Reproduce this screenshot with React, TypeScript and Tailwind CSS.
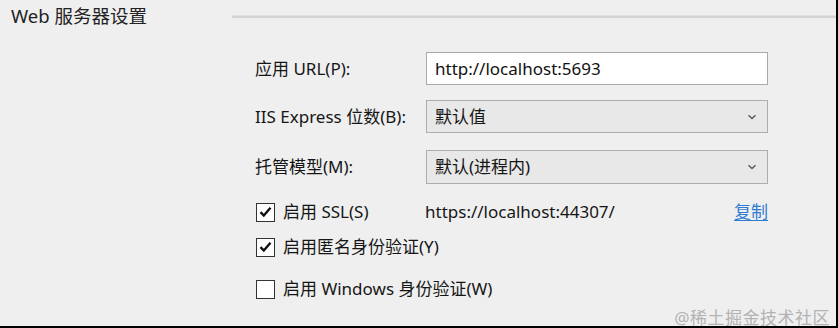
import React from "react";

const font = { fontFamily: '"Noto Sans", "Noto Sans CJK SC", sans-serif' };

function Chevron() {
  return (
    <svg width="10" height="7" viewBox="0 0 10 7" className="absolute right-[10px] top-1/2 -translate-y-1/2">
      <path d="M1.5 1.8 L5 5 L8.5 1.8" fill="none" stroke="#5a5a5a" strokeWidth="1.5" />
    </svg>
  );
}

function Check({ checked }: { checked: boolean }) {
  return (
    <div className="w-[19px] h-[19px] border-[1.5px] border-[#333] bg-white flex items-center justify-center shrink-0">
      {checked && (
        <svg width="13" height="12" viewBox="0 0 13 12">
          <path d="M1.5 6.2 L4.8 9.5 L11.5 1.8" fill="none" stroke="#111" strokeWidth="2.4" />
        </svg>
      )}
    </div>
  );
}

export default function App() {
  return (
    <div
      className="w-[838px] h-[328px] bg-[#efefef] border-r-2 border-b-2 border-black text-[#161616] overflow-hidden"
      style={font}
    >
      <div className="flex items-center h-[33px] pl-[11px]">
        <span className="text-[18.5px] leading-none text-[#222]">Web 服务器设置</span>
        <div className="flex-1 ml-[85px] h-[3px] bg-[#d3d3d3] border-t border-[#e0e0e0]" />
      </div>

      <div className="ml-[255px] w-[513px] text-[17px]">
        <div className="flex items-center mt-[19px] h-[33px]">
          <div className="w-[171px]">应用 URL(P):</div>
          <div className="flex-1 h-full bg-white border border-[#a9a9a9] flex items-center pl-[8px] text-[#111]">
            http://localhost:5693
          </div>
        </div>
        <div className="flex items-center mt-[15px] h-[33px]">
          <div className="w-[171px] whitespace-nowrap">IIS Express 位数(B):</div>
          <div className="relative flex-1 h-full bg-[#e8e8e8] border border-[#adadad] flex items-center pl-[8px]">
            默认值
            <Chevron />
          </div>
        </div>
        <div className="flex items-center mt-[17px] h-[34px]">
          <div className="w-[171px]">托管模型(M):</div>
          <div className="relative flex-1 h-full bg-[#e8e8e8] border border-[#adadad] flex items-center pl-[8px]">
            默认(进程内)
            <Chevron />
          </div>
        </div>

        <div className="flex items-center mt-[18px] h-[20px] ml-[1px]">
          <Check checked />
          <div className="ml-[8px] w-[142px]">启用 SSL(S)</div>
          <div className="flex-1">https://localhost:44307/</div>
          <a className="text-[#2f7bd2] underline underline-offset-2">复制</a>
        </div>
        <div className="flex items-center mt-[15px] h-[20px] ml-[1px]">
          <Check checked />
          <div className="ml-[8px]">启用匿名身份验证(Y)</div>
        </div>
        <div className="flex items-center mt-[22px] h-[20px] ml-[1px]">
          <Check checked={false} />
          <div className="ml-[8px]">启用 Windows 身份验证(W)</div>
        </div>
      </div>

      <div className="flex justify-end pr-[6px] mt-[6px]">
        <span className="text-[17px] text-[#b3b3b3] tracking-[0.5px]">@稀土掘金技术社区</span>
      </div>
    </div>
  );
}
